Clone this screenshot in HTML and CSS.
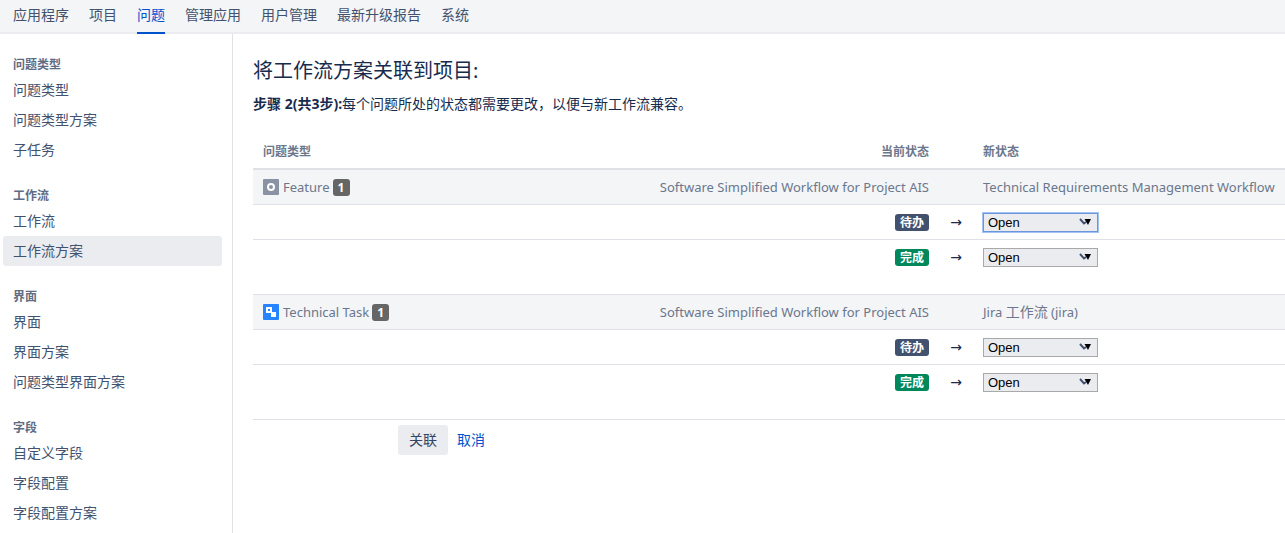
FILE: index.html
```
<!DOCTYPE html>
<html lang="zh-CN">
<head>
<meta charset="utf-8">
<title>将工作流方案关联到项目</title>
<link rel="stylesheet" href="styles.css">
</head>
<body>
<nav class="topnav" aria-label="管理">
  <a href="#">应用程序</a>
  <a href="#">项目</a>
  <a href="#" class="current" aria-current="page">问题</a>
  <a href="#">管理应用</a>
  <a href="#">用户管理</a>
  <a href="#">最新升级报告</a>
  <a href="#">系统</a>
</nav>
<div class="page">
  <aside class="sidebar">
    <section class="group">
      <h2>问题类型</h2>
      <a href="#">问题类型</a>
      <a href="#">问题类型方案</a>
      <a href="#">子任务</a>
    </section>
    <section class="group">
      <h2>工作流</h2>
      <a href="#">工作流</a>
      <a href="#" class="selected">工作流方案</a>
    </section>
    <section class="group">
      <h2>界面</h2>
      <a href="#">界面</a>
      <a href="#">界面方案</a>
      <a href="#">问题类型界面方案</a>
    </section>
    <section class="group">
      <h2>字段</h2>
      <a href="#">自定义字段</a>
      <a href="#">字段配置</a>
      <a href="#">字段配置方案</a>
    </section>
  </aside>
  <main class="content">
    <h1>将工作流方案关联到项目:</h1>
    <p class="step"><strong>步骤 2(共3步):</strong>每个问题所处的状态都需要更改，以便与新工作流兼容。</p>
    <form>
      <table class="mapping">
        <thead>
          <tr>
            <th class="type">问题类型</th>
            <th class="status">当前状态</th>
            <th class="arrow"></th>
            <th class="target">新状态</th>
          </tr>
        </thead>
        <tbody>
          <tr class="summary">
            <td>
              <span class="issue-type">
                <svg width="16" height="16" viewBox="0 0 16 16" aria-hidden="true"><rect width="16" height="16" rx="1" fill="#8993a4"/><circle cx="8" cy="8" r="3" fill="none" stroke="#fff" stroke-width="2"/></svg>
                <span class="name">Feature</span>
                <span class="count">1</span>
              </span>
            </td>
            <td class="status">Software Simplified Workflow for Project AIS</td>
            <td></td>
            <td>Technical Requirements Management Workflow</td>
          </tr>
          <tr>
            <td></td>
            <td class="status"><label class="lozenge todo" for="s1">待办</label></td>
            <td class="arrow">→</td>
            <td><span class="picker"><select id="s1" class="active"><option>Open</option></select><svg width="12" height="8" viewBox="0 0 12 8" aria-hidden="true"><path d="M1 1L5 5.500L7 4" fill="none" stroke="#42526e" stroke-width="2"/><path d="M5.500 1H12L9 7Z" fill="#000"/></svg></span></td>
          </tr>
          <tr class="last">
            <td></td>
            <td class="status"><label class="lozenge done" for="s2">完成</label></td>
            <td class="arrow">→</td>
            <td><span class="picker"><select id="s2"><option>Open</option></select><svg width="12" height="8" viewBox="0 0 12 8" aria-hidden="true"><path d="M1 1L5 5.500L7 4" fill="none" stroke="#42526e" stroke-width="2"/><path d="M5.500 1H12L9 7Z" fill="#000"/></svg></span></td>
          </tr>
        </tbody>
        <tbody>
          <tr class="summary">
            <td>
              <span class="issue-type">
                <svg width="16" height="16" viewBox="0 0 16 16" aria-hidden="true"><rect width="16" height="16" rx="1" fill="#2684ff"/><rect x="4" y="4" width="4" height="4" fill="none" stroke="#fff" stroke-width="2"/><rect x="8" y="8" width="5" height="5" fill="#fff"/></svg>
                <span class="name">Technical Task</span>
                <span class="count">1</span>
              </span>
            </td>
            <td class="status">Software Simplified Workflow for Project AIS</td>
            <td></td>
            <td>Jira <span class="cjk">工作流</span> (jira)</td>
          </tr>
          <tr>
            <td></td>
            <td class="status"><label class="lozenge todo" for="s3">待办</label></td>
            <td class="arrow">→</td>
            <td><span class="picker"><select id="s3"><option>Open</option></select><svg width="12" height="8" viewBox="0 0 12 8" aria-hidden="true"><path d="M1 1L5 5.500L7 4" fill="none" stroke="#42526e" stroke-width="2"/><path d="M5.500 1H12L9 7Z" fill="#000"/></svg></span></td>
          </tr>
          <tr class="last">
            <td></td>
            <td class="status"><label class="lozenge done" for="s4">完成</label></td>
            <td class="arrow">→</td>
            <td><span class="picker"><select id="s4"><option>Open</option></select><svg width="12" height="8" viewBox="0 0 12 8" aria-hidden="true"><path d="M1 1L5 5.500L7 4" fill="none" stroke="#42526e" stroke-width="2"/><path d="M5.500 1H12L9 7Z" fill="#000"/></svg></span></td>
          </tr>
        </tbody>
      </table>
      <div class="buttons">
        <button type="button">关联</button>
        <a href="#">取消</a>
      </div>
    </form>
  </main>
</div>
</body>
</html>
```
FILE: styles.css
```
* { box-sizing: border-box; }

body {
  margin: 0;
  min-height: 100vh;
  display: flex;
  flex-direction: column;
  background: #fff;
  color: #172b4d;
  font: 14px/20px "Noto Sans", "Noto Sans CJK SC", sans-serif;
}

a { text-decoration: none; }

.topnav {
  display: flex;
  gap: 20px;
  height: 34px;
  padding: 0 13px;
  background: #f4f5f7;
  border-bottom: 2px solid #ebecf0;
}
.topnav a {
  height: 34px;
  color: #42526e;
  line-height: 30px;
}
.topnav .current {
  color: #0052cc;
  border-bottom: 2px solid #0052cc;
}

.page { flex: 1; display: flex; }

.sidebar {
  flex: 0 0 233px;
  display: flex;
  flex-direction: column;
  gap: 20px;
  padding: 20px 10px 4px 3px;
  border-right: 1px solid #dfe1e6;
}
.group h2 {
  margin: 0;
  padding: 0 10px;
  color: #5e6c84;
  font-size: 12px;
  font-weight: 600;
  line-height: 21px;
}
.group a {
  display: block;
  padding: 0 10px;
  border-radius: 3px;
  color: #42526e;
  line-height: 30px;
}
.group .selected { background: #ebecf0; }

.content {
  flex: 1;
  min-width: 0;
  padding: 22px 0 0 20px;
}
.content h1 {
  margin: 0;
  font-size: 20px;
  font-weight: 400;
  line-height: 30px;
}
.step { margin: 8px 0 20px; }

.mapping {
  width: 100%;
  border-collapse: separate;
  border-spacing: 0;
}
.mapping th,
.mapping td {
  height: 35px;
  padding: 0 10px;
  border-bottom: 1px solid #dfe1e6;
  text-align: left;
  white-space: nowrap;
}
.mapping th {
  height: 36px;
  padding-top: 2px;
  border-bottom-width: 2px;
  color: #6b778c;
  font-size: 12px;
  font-weight: 600;
}
.mapping .status { text-align: right; }
.mapping .arrow {
  width: 34px;
  padding: 0;
  text-align: center;
  font-family: "Open Sans", "DejaVu Sans", sans-serif;
}
.mapping .target { width: 312px; }
.mapping .summary td {
  background: #f4f5f7;
  color: #6b778c;
  font-size: 13px;
}
.mapping .summary .cjk { font-size: 14px; }
.mapping .last td {
  height: 55px;
  padding-bottom: 20px;
}

.issue-type {
  display: flex;
  align-items: center;
}
.issue-type .name { padding: 0 3px 0 4px; }
.count {
  width: 17px;
  border-radius: 3px;
  background: #666;
  color: #fff;
  font-size: 12px;
  font-weight: 700;
  line-height: 17px;
  text-align: center;
}

.lozenge {
  display: block;
  width: 34px;
  margin-left: auto;
  border-radius: 3px;
  color: #fff;
  font-size: 12px;
  font-weight: 700;
  line-height: 17px;
  text-align: center;
}
.todo { background: #42526e; }
.done { background: #00875a; }

.picker {
  position: relative;
  display: block;
  width: 115px;
}
.picker select {
  display: block;
  width: 100%;
  height: 19px;
  padding: 0 4px;
  appearance: none;
  border: 1px solid #a9a9a9;
  border-radius: 0;
  background: #ebecf0;
  color: #000;
  font: 13px/17px "Liberation Sans", sans-serif;
}
.picker .active {
  border-color: #6c96dc;
  box-shadow: 0 0 0 1px #a4c3f5;
}
.picker svg {
  position: absolute;
  top: 5px;
  right: 7px;
  pointer-events: none;
}

.buttons {
  display: flex;
  align-items: center;
  gap: 9px;
  padding: 5px 0 0 145px;
}
.buttons button {
  width: 50px;
  height: 30px;
  padding: 0;
  border: 0;
  border-radius: 3px;
  background: #ebecf0;
  color: #344563;
  font: inherit;
}
.buttons a { color: #0052cc; }
```
